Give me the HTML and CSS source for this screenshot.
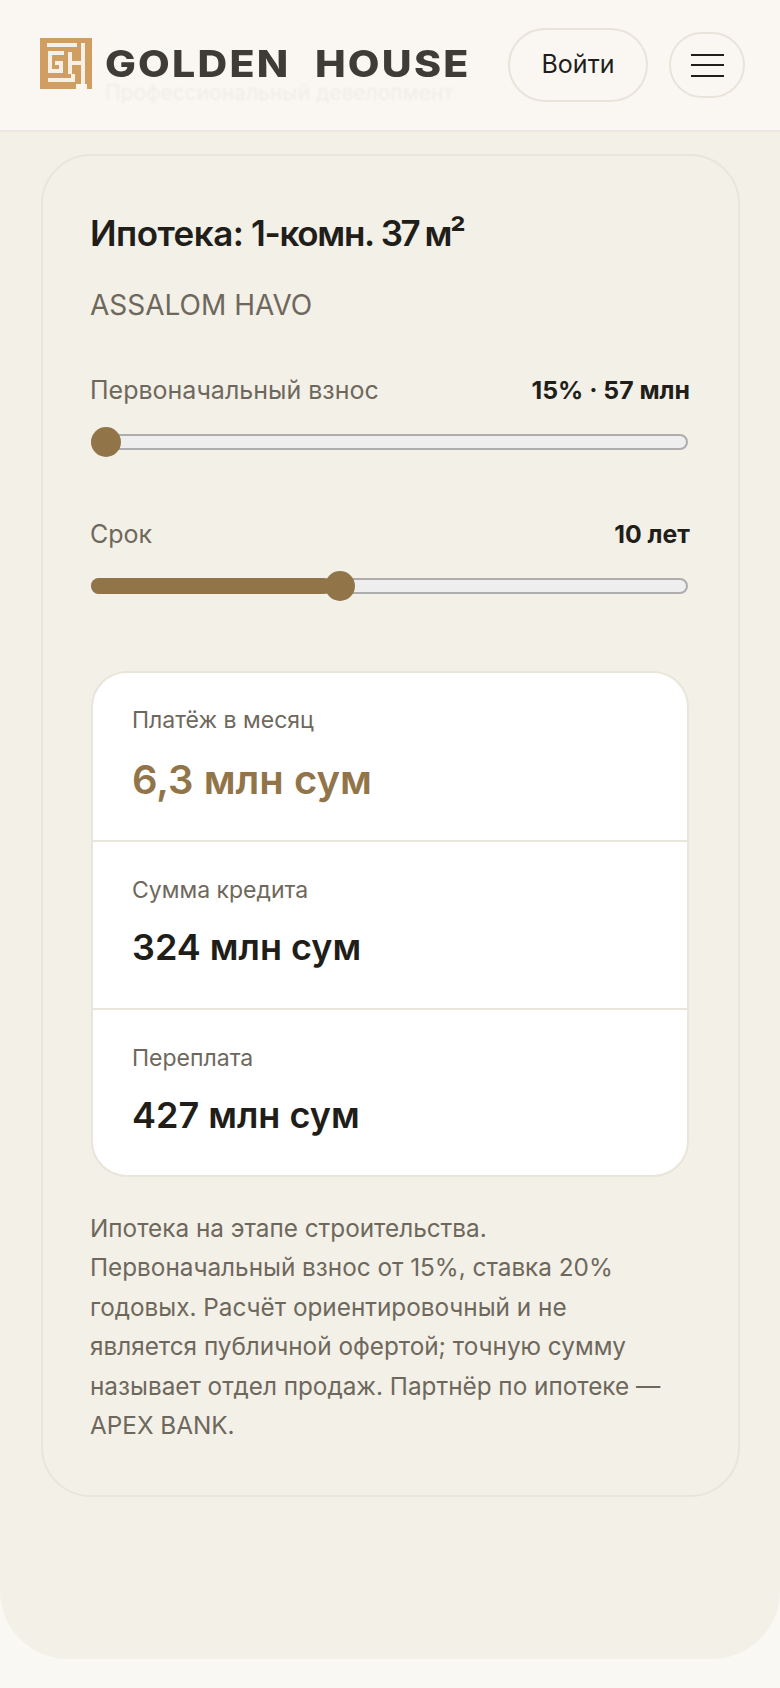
FILE: index.html
```html
<!DOCTYPE html>
<html lang="ru">
<head>
<meta charset="utf-8">
<title>Golden House — Ипотека</title>
<link rel="stylesheet" href="styles.css">
</head>
<body>
<header class="header">
  <div class="ghost">Профессиональный девелопмент</div>
  <div class="brand">
    <svg class="logo" viewBox="0 0 52 51" aria-hidden="true">
      <rect width="52" height="46" fill="#cf9e60"/>
      <path fill="#cf9e60" d="M47 46H52V51H47ZM0 46H36V51H0Z"/>
      <path fill="none" stroke="#f7f0e6" stroke-width="4" d="M7 7H37M43 5V46M30 25H43M30 14V36M24 15H10V33H21V25H15M8 42H33V36"/>
    </svg>
    <span class="brand-name">GOLDEN HOUSE</span>
  </div>
  <div class="actions">
    <button class="login">Войти</button>
    <button class="burger" aria-label="Меню"><i></i><i></i><i></i></button>
  </div>
</header>
<main class="section">
  <article class="card">
    <h1 class="title"><span class="title-lead">Ипотека:</span> 1-комн. <span class="title-unit">37 м²</span></h1>
    <p class="project">ASSALOM HAVO</p>
    <div class="field">
      <div class="field-head"><span>Первоначальный взнос</span><b>15% · 57 млн</b></div>
      <div class="track"><div class="fill fill-min"></div><div class="thumb"></div></div>
    </div>
    <div class="field">
      <div class="field-head"><span>Срок</span><b>10 лет</b></div>
      <div class="track"><div class="fill fill-term"></div><div class="thumb"></div></div>
    </div>
    <div class="results">
      <div class="row">
        <div class="row-label">Платёж в месяц</div>
        <div class="row-value accent">6,3 млн сум</div>
      </div>
      <div class="row">
        <div class="row-label">Сумма кредита</div>
        <div class="row-value">324 млн сум</div>
      </div>
      <div class="row">
        <div class="row-label">Переплата</div>
        <div class="row-value">427 млн сум</div>
      </div>
    </div>
    <p class="note">Ипотека на этапе строительства. Первоначальный взнос от 15%, ставка 20% годовых. Расчёт ориентировочный и не является публичной офертой; точную сумму называет отдел продаж. Партнёр по ипотеке — APEX BANK.</p>
  </article>
</main>
</body>
</html>
```
FILE: styles.css
```css
* { box-sizing: border-box; }
html, body { margin: 0; padding: 0; }
body {
  width: 780px;
  height: 1688px;
  overflow: hidden;
  background: #f9f8f3;
  font-family: Inter, "Noto Sans", sans-serif;
  color: #211e19;
}
.header {
  position: relative;
  height: 132px;
  padding: 28px 35px 0 40px;
  display: flex;
  justify-content: space-between;
  align-items: flex-start;
  background: #faf7f2;
  border-bottom: 2px solid #ece8de;
  overflow: hidden;
}
.ghost {
  position: absolute;
  left: 105px;
  top: 82px;
  font-size: 21px;
  line-height: 22px;
  color: #3d3a35;
  opacity: .05;
  filter: blur(1px);
  white-space: nowrap;
}
.brand {
  position: relative;
  display: flex;
  align-items: center;
  gap: 13px;
  height: 51px;
  margin-top: 10px;
}
.logo { width: 52px; height: 51px; display: block; }
.brand-name {
  font-family: Inter, sans-serif;
  font-weight: 800;
  font-size: 37px;
  line-height: 32px;
  letter-spacing: 2px;
  word-spacing: 12px;
  color: #3f3c38;
  white-space: nowrap;
  transform: scaleX(1.11);
  transform-origin: left center;
}
.actions { position: relative; display: flex; align-items: center; gap: 21px; }
.login {
  width: 140px;
  height: 74px;
  padding: 0 0 3px;
  border: 2px solid #e8e4da;
  border-radius: 37px;
  background: transparent;
  font: 400 25px Inter, sans-serif;
  color: #211e19;
}
.burger {
  width: 76px;
  height: 66px;
  padding: 0;
  border: 2px solid #e8e4da;
  border-radius: 38px;
  background: transparent;
  display: flex;
  flex-direction: column;
  align-items: center;
  justify-content: center;
  gap: 8.5px;
}
.burger i { display: block; width: 33px; height: 2px; background: #211e19; }
.section {
  height: 1527px;
  padding: 22px 40px 0 41px;
  background: #f3f0e8;
  border-radius: 0 0 68px 68px;
}
.card {
  height: 1343px;
  padding: 55px 48px 0 47px;
  border: 2px solid #e8e5da;
  border-radius: 50px;
}
.title {
  margin: 0;
  font-size: 35px;
  line-height: 44px;
  font-weight: 600;
  letter-spacing: -1.3px;
}
.title-lead { letter-spacing: -0.5px; }
.title-unit { letter-spacing: -2.5px; }
.project {
  margin: 31px 0 0;
  font-size: 28px;
  line-height: 38px;
  color: #6e685c;
}
.field { margin-top: 50px; }
.field + .field { margin-top: 68px; }
.field-head {
  display: flex;
  justify-content: space-between;
  align-items: center;
  font-size: 25px;
  line-height: 32px;
  color: #6e685c;
}
.field-head b { font-size: 24.8px; font-weight: 700; color: #211e19; }
.track {
  position: relative;
  margin-top: 28px;
  width: 597px;
  height: 16px;
  margin-left: 1px;
  background: #eeeeee;
  border: 2px solid #adadad;
  border-radius: 8px;
}
.fill {
  position: absolute;
  left: -2px;
  top: -2px;
  height: 16px;
  background: #917549;
  border-radius: 8px;
}
.fill-min { width: 0; }
.fill-term { width: 240px; }
.thumb {
  position: absolute;
  top: -9px;
  left: -2px;
  width: 30px;
  height: 30px;
  border-radius: 50%;
  background: #917549;
}
.fill-term + .thumb { left: 232px; }
.results {
  height: 506px;
  margin: 77px 1px 0;
  background: #fff;
  border: 2px solid #e8e5da;
  border-radius: 36px;
  overflow: hidden;
}
.row { height: 168px; padding: 33px 39px 0; }
.row:first-child { height: 167px; padding-top: 32px; }
.row + .row { border-top: 2px solid #e8e5da; }
.row-label { font-size: 23px; line-height: 30px; color: #6e685c; }
.row-value {
  margin-top: 18px;
  font-size: 36px;
  line-height: 48px;
  font-weight: 600;
  color: #211e19;
}
.accent { margin-top: 21px; font-size: 40px; color: #917549; }
.note {
  margin: 32px 0 0;
  max-width: 575px;
  font-size: 24.3px;
  line-height: 39.4px;
  color: #6e685c;
}
```
